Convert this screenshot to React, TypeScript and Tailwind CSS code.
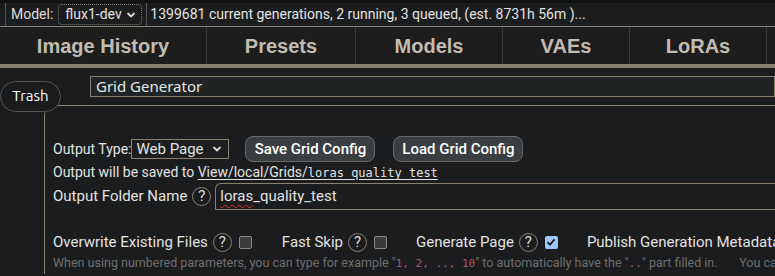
import React from "react";

const tabs = [
  { label: "Image History", w: "w-[207px]" },
  { label: "Presets", w: "w-[149px]" },
  { label: "Models", w: "w-[147px]" },
  { label: "VAEs", w: "w-[127px]" },
  { label: "LoRAs", w: "w-[137px]" },
];

function Help() {
  return (
    <span className="ml-[5px] mr-[7px] inline-flex h-[19px] w-[19px] shrink-0 items-center justify-center rounded-full border border-[#8a8070] text-[15px] leading-none text-[#ddd]">
      ?
    </span>
  );
}

function Check({ on }: { on?: boolean }) {
  return on ? (
    <span className="inline-flex h-[13px] w-[13px] shrink-0 items-center justify-center rounded-[2px] bg-[#9ec7ff]">
      <svg width="10" height="10" viewBox="0 0 10 10">
        <path d="M1.5 5.2 L4 7.6 L8.5 2.4" fill="none" stroke="#1a1b1d" strokeWidth="1.8" />
      </svg>
    </span>
  ) : (
    <span className="inline-block h-[13px] w-[13px] shrink-0 rounded-[2px] border border-[#8a8a8a] bg-[#3b3b3b]" />
  );
}

export default function App() {
  return (
    <div className="h-[276px] w-[775px] overflow-hidden bg-[#1b1c1e] font-['Roboto',sans-serif] text-[14px] text-[#e2e2e2]">
      <div className="h-[3px] bg-[#101112]" />
      {/* status bar */}
      <div className="flex h-[24px] items-center whitespace-nowrap border-b border-[#8a8070] bg-[#1c1d1f]">
        <div className="ml-[5px] flex h-full items-center border-l border-[#555] pl-[5px]">
          <span className="text-[#dcdcdc]">Model:</span>
          <span className="ml-[5px] flex h-[21px] w-[84px] shrink-0 items-center justify-between rounded-[4px] border border-dotted border-[#777] pl-[6px] pr-[5px]">
            flux1-dev
            <svg width="10" height="8" viewBox="0 0 10 8">
              <path d="M1.5 2 L5 5.5 L8.5 2" fill="none" stroke="#ddd" strokeWidth="1.8" />
            </svg>
          </span>
          <span className="ml-[4px] h-full border-l border-[#555] pl-[3px] leading-[23px]">
            1399681 current generations, 2 running, 3 queued, (est. 8731h 56m )...
          </span>
        </div>
      </div>
      {/* tabs */}
      <div className="flex h-[41px] border-b-4 border-[#8a8070] bg-[#1d1d1e]">
        {tabs.map((t) => (
          <div
            key={t.label}
            className={`${t.w} flex shrink-0 items-center justify-center border-r border-[#3a3a3a] font-['Liberation_Sans',sans-serif] text-[20px] font-bold text-[#c2bcb1]`}
          >
            {t.label}
          </div>
        ))}
      </div>
      {/* grid generator panel */}
      <div className="relative pt-[8px]">
        <div className="ml-[90px] flex h-[21px] items-center border border-[#8a8070] bg-[#202425] pl-[5px] font-['Noto_Sans',sans-serif] text-[15px] text-[#e6e6e6]">
          Grid Generator
        </div>
        <div className="ml-[44px] mt-[8px] rounded-tl-[10px] border-l border-t border-[#8a8070] pl-[8px] pt-[30px]">
          <div className="flex h-[26px] items-center">
            <span>Output Type:</span>
            <span className="flex h-[20px] w-[98px] items-center justify-between border border-[#8a8070] bg-[#1d1e20] pl-[4px] pr-[6px] text-[15px]">
              Web Page
              <svg width="10" height="8" viewBox="0 0 10 8">
                <path d="M1.5 2 L5 5.5 L8.5 2" fill="none" stroke="#ddd" strokeWidth="1.8" />
              </svg>
            </span>
            <button className="ml-[16px] h-[26px] w-[130px] rounded-[8px] border border-[#6a6a6a] bg-[#3a3e41] text-[15px] font-medium text-white">
              Save Grid Config
            </button>
            <button className="ml-[18px] h-[26px] w-[130px] rounded-[8px] border border-[#6a6a6a] bg-[#3a3e41] text-[15px] font-medium text-white">
              Load Grid Config
            </button>
          </div>
          <div className="flex h-[21px] items-center">
            Output will be saved to&nbsp;
            <span className="underline underline-offset-2">
              View/local/Grids/
              <span className="font-['DejaVu_Sans_Mono',monospace] text-[12px]">loras_quality_test</span>
            </span>
          </div>
          <div className="flex h-[27px] items-center text-[15px]">
            <span>Output Folder Name</span>
            <Help />
            <span className="-ml-[3px] flex h-[27px] flex-1 items-center rounded-tl-[6px] border-b border-l border-t border-[#8a8070] pl-[4px] text-[15px]">
              <span className="underline decoration-[#e03030] decoration-wavy decoration-1 underline-offset-[3px]">loras</span>
              _quality_test
            </span>
          </div>
          <div className="mt-[21px] flex h-[22px] items-center whitespace-nowrap text-[15px]">
            <span>Overwrite Existing Files</span>
            <Help />
            <Check />
            <span className="ml-[30px]">Fast Skip</span>
            <Help />
            <Check />
            <span className="ml-[29px]">Generate Page</span>
            <Help />
            <Check on />
            <span className="ml-[29px]">Publish Generation Metadata</span>
          </div>
          <div className="whitespace-nowrap text-[12.5px] leading-[20px] text-[#6e6e6e]">
            When using numbered parameters, you can type for example "
            <span className="font-['DejaVu_Sans_Mono',monospace] text-[11px] text-[#a05a78]">1, 2, .., 10</span>
            " to automatically have the "
            <span className="font-['DejaVu_Sans_Mono',monospace] text-[11px] text-[#a05a78]">..</span>
            " part filled in.&nbsp;&nbsp;&nbsp;&nbsp;&nbsp;&nbsp; You can also
          </div>
        </div>
        <div className="absolute left-0 top-[13px] flex h-[31px] w-[61px] items-center justify-center rounded-[16px] border border-[#555] bg-[#1b1c1e] font-['Ubuntu','Noto_Sans',sans-serif] text-[15px] text-white">
          Trash
        </div>
      </div>
    </div>
  );
}
